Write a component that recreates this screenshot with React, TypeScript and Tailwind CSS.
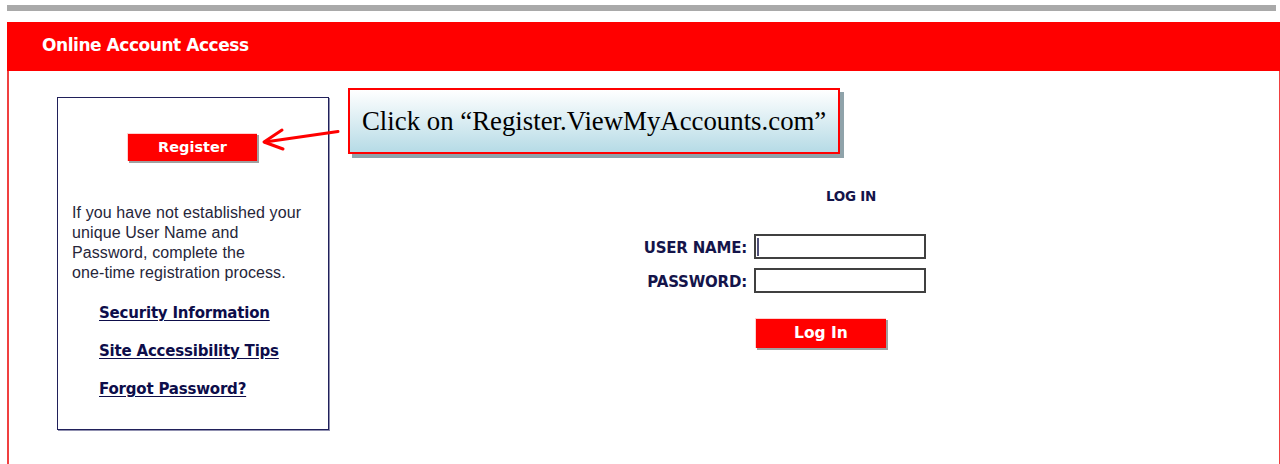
import React from "react";

const tahoma = { fontFamily: '"DejaVu Sans", Verdana, sans-serif' };

const helpLinks = [
  { href: "#security", text: "Security Information" },
  { href: "#accessibility", text: "Site Accessibility Tips" },
  { href: "#forgot", text: "Forgot Password?" },
] as const;

// red bevelled button used for Register and Log In
function RedButton({ label, className }: { label: string; className: string }): JSX.Element {
  return (
    <button
      type="button"
      className={`flex items-center justify-center bg-[#ff0000] text-white font-bold border-t border-l border-[#ffd0d0] shadow-[2px_2px_0_#a0a0a0] ${className}`}
      style={tahoma}
    >
      {label}
    </button>
  );
}

// left card with registration info and help links
function RegisterBox(): JSX.Element {
  return (
    <div className="w-[272px] h-[333px] shrink-0 border border-[#20205a] shadow-[1px_1px_0_#9090b0] flex flex-col">
      <div className="flex justify-center pt-[35px]">
        <RedButton label="Register" className="w-[130px] h-[28px] ml-[-2px] text-[14.5px]" />
      </div>
      <p
        className="pl-[14px] mt-[42px] text-[16px] leading-[20px] tracking-[0.1px] text-[#26263a]"
        style={{ fontFamily: '"Liberation Sans", Arial, sans-serif' }}
      >
        If you have not established your
        <br />
        unique User Name and
        <br />
        Password, complete the
        <br />
        one-time registration process.
      </p>
      <ul className="pl-[41px] mt-[19px] flex flex-col gap-[18px]">
        {helpLinks.map((link) => (
          <li key={link.text} className="h-[20px] leading-[20px]">
            <a
              href={link.href}
              className="text-[15px] font-bold text-[#0d0d4a] underline underline-offset-2 tracking-[-0.2px]"
              style={tahoma}
            >
              {link.text}
            </a>
          </li>
        ))}
      </ul>
    </div>
  );
}

// username / password form
function LoginForm(): JSX.Element {
  return (
    <div className="ml-[292px] pt-[90px] w-[320px]" style={tahoma}>
      <div className="ml-[205px] text-[13.5px] leading-[18px] font-bold text-[#14144a] tracking-[-0.3px]">
        LOG IN
      </div>
      <div className="mt-[29px] grid grid-cols-[126px_172px] gap-x-[7px] gap-y-[8px] items-center">
        <label className="pt-[3px] text-right text-[15px] font-bold text-[#14144a] tracking-[-0.2px]">
          USER NAME:
        </label>
        <div className="relative h-[25px] border-2 border-[#404040] bg-white">
          <span className="absolute left-[1px] top-[2px] w-[2px] h-[18px] bg-[#505078]" />
        </div>
        <label className="pt-[3px] text-right text-[15px] font-bold text-[#14144a] tracking-[-0.2px]">
          PASSWORD:
        </label>
        <div className="h-[25px] border-2 border-[#404040] bg-white" />
      </div>
      <RedButton label="Log In" className="ml-[134px] mt-[25px] w-[131px] h-[30px] text-[15.5px]" />
    </div>
  );
}

export default function App(): JSX.Element {
  return (
    <div className="relative w-[1280px] h-[464px] bg-white overflow-hidden">
      {/* top rule */}
      <div className="ml-[7px] mt-[5px] w-[1269px] h-[6px] bg-[#a9a9a9]" />

      <div className="ml-[7px] mt-[11px] w-[1273px] h-[442px] border-l-2 border-r border-[#f04040] flex flex-col">
        <div className="h-[49px] bg-[#ff0000] flex items-center pl-[35px] -ml-[2px] mr-[-1px]">
          <h1 className="text-white font-bold text-[17px] tracking-[-0.45px] -mt-[2px]" style={tahoma}>
            Online Account Access
          </h1>
        </div>
        <div className="flex pt-[26px] pl-[48px]">
          <RegisterBox />
          <LoginForm />
        </div>
      </div>

      {/* callout note */}
      <div
        className="absolute left-[348px] top-[88px] w-[492px] h-[66px] border-2 border-[#ff0000] bg-gradient-to-b from-white to-[#b6dbe6] shadow-[4px_4px_0_#8fa3aa] flex items-center pl-[12px] text-[26.8px] text-black"
        style={{ fontFamily: '"Liberation Serif", "Times New Roman", serif' }}
      >
        Click on “Register.ViewMyAccounts.com”
      </div>

      {/* pointer arrow */}
      <svg className="absolute left-0 top-0" width="400" height="200" viewBox="0 0 400 200">
        <g stroke="#ff0000" strokeWidth="3" strokeLinecap="round" fill="none">
          <path d="M338 131.5 L265 142" />
          <path d="M282 130 L264 142 L283 149" strokeLinejoin="round" />
        </g>
      </svg>
    </div>
  );
}
